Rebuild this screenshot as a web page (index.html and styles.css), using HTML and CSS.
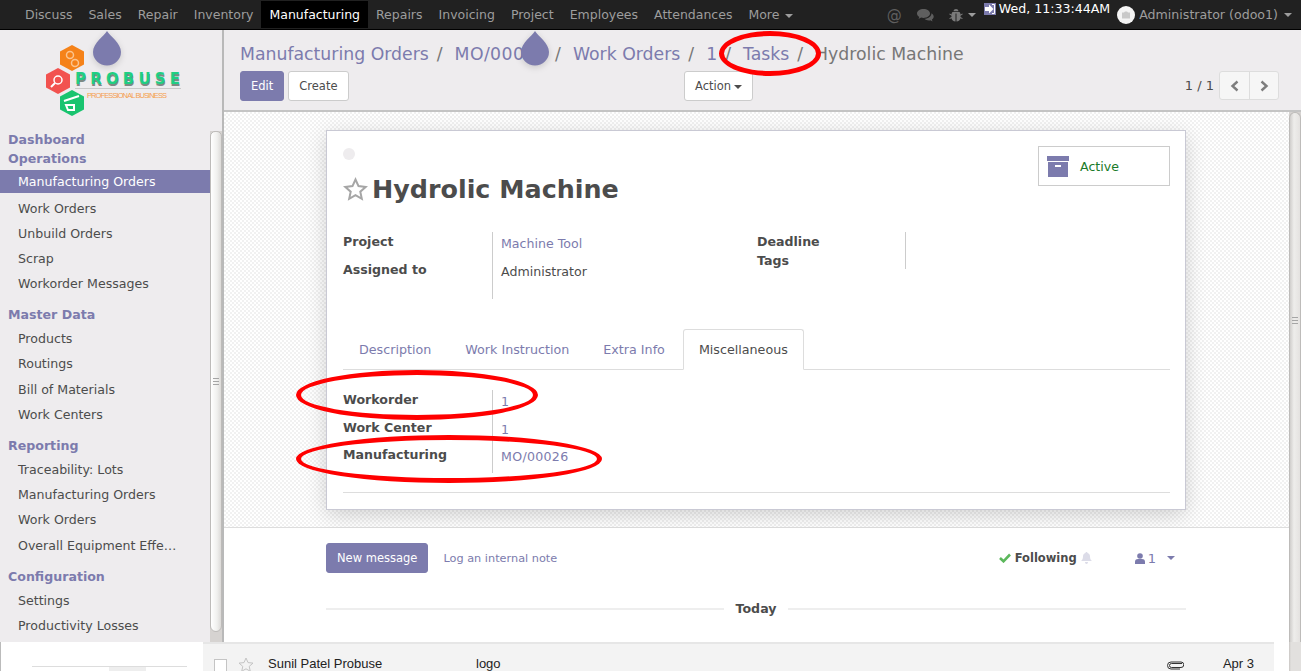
FILE: index.html
```html
<!DOCTYPE html>
<html lang="en">
<head>
  <meta charset="UTF-8" />
  <meta name="viewport" content="width=device-width, initial-scale=1.0"/>
  <title>Hydrolic Machine - Odoo</title>
  <link rel="stylesheet" href="styles.css">
</head>
<body>

  <header class="topbar">
    <nav class="apps">
      <a>Discuss</a>
      <a>Sales</a>
      <a>Repair</a>
      <a>Inventory</a>
      <a class="current">Manufacturing</a>
      <a>Repairs</a>
      <a>Invoicing</a>
      <a>Project</a>
      <a>Employees</a>
      <a>Attendances</a>
      <a>More <i class="caret"></i></a>
    </nav>
    <div class="systray">
      <span class="at">@</span>
      <svg class="tray-chat" width="17" height="14" viewBox="0 0 17 14"><path fill="#5f5f5f" d="M6.5 1C2.9 1 0 3 0 5.5c0 1.4.9 2.6 2.3 3.4L1.5 11l2.6-1.4c.8.2 1.6.3 2.4.3 3.6 0 6.5-2 6.5-4.4S10.100 1 6.500 1z"/><path fill="#5f5f5f" d="M14.500 5.200c.1 3-2.900 5.400-7 5.600 1 1 2.600 1.600 4.400 1.600.5 0 1 0 1.500-.2l2.100 1.200-.6-1.800c1.100-.7 1.800-1.700 1.800-2.800 0-1.500-.9-2.800-2.200-3.600z"/></svg>
      <span class="tray-bug">
        <svg width="14" height="14" viewBox="-.5 0 14 14"><path fill="#7a7a7a" d="M4 3.200C4.200 1.700 5.200 1 6.500 1S8.800 1.700 9 3.200zM3 4h7c.6.6 1 1.400 1 2.400l1.800-1 .5.9L11 7.800V9l2.200 1.200-.5.900L11 10.200c-.3 1.800-1.800 3.300-4 3.300V5.500H6v8c-2.200 0-3.700-1.500-4-3.300l-1.700.9-.5-.9L2 9V7.800L-.3 6.300l.5-.9 1.800 1c0-1 .4-1.800 1-2.400z"/></svg>
        <i class="caret"></i>
      </span>
      <span class="clock">
        <svg width="12" height="12" viewBox="0 0 12 12"><rect width="12" height="12" fill="#7c7bad"/><path fill="#fff" d="M1 4h4V1.500L9.500 6 5 10.500V8H1z"/><path fill="none" stroke="#fff" stroke-width="1" d="M8 1.500h2.500v9H8"/></svg>
        <span>Wed, 11:33:44AM</span>
      </span>
      <span class="user">
        <svg width="18" height="18" viewBox="0 0 18 18"><circle cx="9" cy="9" r="9" fill="#f4f4f4"/><path fill="#c9c9c9" d="M5 6.500h2l1-1h2l1 1h2v6H5z"/></svg>
        <span>Administrator (odoo1)</span>
        <i class="caret"></i>
      </span>
    </div>
  </header>

  <div class="app">
    <aside class="sidebar">
      <div class="sidebar-body">
        <div class="logo">
          <svg width="210" height="100" viewBox="0 29 210 100">
            <polygon fill="#f58219" points="72,44 84,50.500 84,63.500 72,70 60,63.500 60,50.500"/>
            <polygon fill="#f2524f" points="58,67 70,73.500 70,86.500 58,93 46,86.500 46,73.500"/>
            <polygon fill="#19c46f" points="72,89 84,95.500 84,108.500 72,115 60,108.500 60,95.500"/>
            <circle cx="70" cy="54" r="3.500" fill="none" stroke="#fbc48e" stroke-width="1.500"/>
            <circle cx="75" cy="62" r="3.500" fill="none" stroke="#fbc48e" stroke-width="1.500"/>
            <circle cx="58" cy="79" r="4" fill="none" stroke="#fff" stroke-width="1.500"/>
            <path stroke="#fff" stroke-width="2" d="M55 82l-4 4"/>
            <path stroke="#fff" stroke-width="2" fill="none" d="M64 100l15-5M66 104h8v5h-6z"/>
            <text class="logo-shade" x="75.500" y="84.500" textLength="105">PROBUSE</text>
            <text class="logo-name" x="75" y="83" textLength="105">PROBUSE</text>
            <line x1="75" y1="87.500" x2="181" y2="87.500" stroke="#c9c9c9"/>
            <text class="logo-tag" x="87" y="97" textLength="80">PROFESSIONAL BUSINESS</text>
          </svg>
        </div>
        <h4 class="menu-head">Dashboard</h4>
        <h4 class="menu-head">Operations</h4>
        <a class="menu-item active">Manufacturing Orders</a>
        <a class="menu-item">Work Orders</a>
        <a class="menu-item">Unbuild Orders</a>
        <a class="menu-item">Scrap</a>
        <a class="menu-item">Workorder Messages</a>
        <h4 class="menu-head spaced">Master Data</h4>
        <a class="menu-item">Products</a>
        <a class="menu-item">Routings</a>
        <a class="menu-item">Bill of Materials</a>
        <a class="menu-item">Work Centers</a>
        <h4 class="menu-head spaced">Reporting</h4>
        <a class="menu-item">Traceability: Lots</a>
        <a class="menu-item">Manufacturing Orders</a>
        <a class="menu-item">Work Orders</a>
        <a class="menu-item">Overall Equipment Effe…</a>
        <h4 class="menu-head spaced">Configuration</h4>
        <a class="menu-item">Settings</a>
        <a class="menu-item">Productivity Losses</a>
      </div>
      <div class="side-rail">
        <div class="rail-thumb"><span class="grip"></span></div>
      </div>
    </aside>

    <main class="main">
      <section class="control-panel">
        <ol class="breadcrumb">
          <li><a>Manufacturing Orders</a></li>
          <li><a class="ref-no">MO/00026</a></li>
          <li><a>Work Orders</a></li>
          <li><a>1</a></li>
          <li><a>Tasks</a></li>
          <li class="last">Hydrolic Machine</li>
        </ol>
        <div class="cp-row">
          <div class="cp-buttons">
            <button class="btn primary">Edit</button>
            <button class="btn">Create</button>
          </div>
          <button class="btn action">Action<i class="caret dark"></i></button>
          <div class="pager">
            <span class="pager-count">1 / 1</span>
            <span class="pager-btns">
              <span><svg width="9" height="12" viewBox="0 0 9 12"><path fill="none" stroke="#7d7d7d" stroke-width="2.400" d="M7.500 1.500L2.500 6l5 4.500"/></svg></span>
              <span><svg width="9" height="12" viewBox="0 0 9 12"><path fill="none" stroke="#7d7d7d" stroke-width="2.400" d="M1.500 1.500l5 4.500-5 4.500"/></svg></span>
            </span>
          </div>
        </div>
      </section>

      <div class="content">
        <div class="view">
          <div class="sheet-bg">
            <article class="sheet">
              <div class="sheet-head">
                <div>
                  <span class="kanban-dot"></span>
                  <h1 class="title">
                    <svg width="25" height="25" viewBox="0 0 25 25"><path fill="none" stroke="#a6a6a6" stroke-width="2" d="M12.500 2.500l3 6.600 7.200.8-5.400 4.800 1.500 7.100-6.300-3.600-6.300 3.600 1.500-7.100-5.400-4.800 7.200-.8z"/></svg>
                    <span>Hydrolic Machine</span>
                  </h1>
                </div>
                <div class="stat-btn">
                  <svg width="22" height="21" viewBox="0 0 22 21"><rect width="22" height="5" fill="#7c7bad"/><rect x="1" y="6" width="20" height="15" fill="#7c7bad"/><rect x="8" y="9" width="6" height="2" fill="#fff"/></svg>
                  <span>Active</span>
                </div>
              </div>

              <div class="groups">
                <div class="fields top-left">
                  <div class="f-label">Project</div>
                  <div class="f-value"><a>Machine Tool</a></div>
                  <div class="f-label">Assigned to</div>
                  <div class="f-value">Administrator</div>
                </div>
                <div class="fields top-right">
                  <div class="f-label">Deadline</div>
                  <div class="f-value"></div>
                  <div class="f-label">Tags</div>
                  <div class="f-value"></div>
                </div>
              </div>

              <ul class="tabs">
                <li>Description</li>
                <li>Work Instruction</li>
                <li>Extra Info</li>
                <li class="active">Miscellaneous</li>
              </ul>

              <div class="fields misc">
                <div class="f-label">Workorder</div>
                <div class="f-value"><a>1</a></div>
                <div class="f-label">Work Center</div>
                <div class="f-value"><a>1</a></div>
                <div class="f-label">Manufacturing</div>
                <div class="f-value"><a class="ref-small">MO/00026</a></div>
              </div>
              <hr class="sheet-rule">
            </article>
          </div>

          <section class="chatter">
            <div class="chatter-bar">
              <button class="btn primary">New message</button>
              <a class="log-note">Log an internal note</a>
              <span class="follow">
                <svg width="12" height="10" viewBox="0 0 12 10"><path fill="none" stroke="#5cb85c" stroke-width="2.600" d="M1 5l3.500 3.300L11 1.500"/></svg>
                <b>Following</b>
                <svg width="11" height="12" viewBox="0 0 11 12"><path fill="#dcdce8" d="M5.500 0c.6 0 1 .4 1 1 1.700.4 2.500 1.800 2.500 3.500 0 2.500.7 3.500 2 4.500H0c1.300-1 2-2 2-4.500C2 2.800 2.800 1.400 4.500 1c0-.6.4-1 1-1zM4 10h3c0 1-.7 2-1.500 2S4 11 4 10z"/></svg>
              </span>
              <span class="followers">
                <svg width="10" height="11" viewBox="0 0 10 11"><circle cx="5" cy="3" r="2.800" fill="#7c7bad"/><path fill="#7c7bad" d="M0 11V8.500C0 6.800 1.500 6 3 6h4c1.500 0 3 .8 3 2.500V11z"/></svg>
                <a>1</a>
                <i class="caret purple"></i>
              </span>
            </div>
            <div class="today"><span>Today</span></div>
          </section>
        </div>
        <div class="main-scroll">
          <div class="rail-thumb"><span class="grip"></span></div>
        </div>
      </div>
    </main>
  </div>

  <footer class="bottom-strip">
    <div class="strip-left"><span class="strip-tab"></span></div>
    <div class="mail-row">
      <span class="mail-check"></span>
      <svg class="mail-star" width="16" height="16" viewBox="0 0 16 16"><path fill="none" stroke="#c4c4c4" d="M8 1l2 4.600 5 .5-3.800 3.300 1.100 4.900L8 11.800l-4.300 2.500 1.100-4.900L1 6.100l5-.5z"/></svg>
      <span class="mail-from">Sunil Patel Probuse</span>
      <span class="mail-subject">logo</span>
      <svg class="mail-clip" width="17" height="9" viewBox="0 0 17 9"><path fill="none" stroke="#333" d="M15 2.500H4.500a2 2 0 0 0 0 4H14a2.500 2.500 0 0 0 0-5.500H4A3.500 3.500 0 0 0 4 8h9"/></svg>
      <span class="mail-date">Apr 3</span>
    </div>
    <div class="strip-right"></div>
  </footer>

  <!-- marks drawn over the screenshot -->
  <svg class="drop drop-side" width="30" height="36" viewBox="0 0 30 36"><path fill="#7c7bad" d="M15 1c3 5 14 12 14 21a14 13.500 0 0 1-28 0C1 13 12 6 15 1z"/></svg>
  <svg class="drop drop-crumb" width="30" height="36" viewBox="0 0 30 36"><path fill="#7c7bad" d="M15 1c3 5 14 12 14 21a14 13.500 0 0 1-28 0C1 13 12 6 15 1z"/></svg>
  <span class="ring ring-tasks"></span>
  <span class="ring ring-workorder"></span>
  <span class="ring ring-manufacturing"></span>

</body>
</html>
```

FILE: styles.css
```css
* { box-sizing: border-box; }
html, body { height: 100%; }
body {
  margin: 0;
  display: flex;
  flex-direction: column;
  overflow: hidden;
  font-family: "DejaVu Sans", sans-serif;
  font-size: 12.6px;
  color: #4c4c4c;
  background: #fff;
}
a { color: #7c7bad; text-decoration: none; }

.caret {
  display: inline-block;
  width: 0;
  height: 0;
  margin-left: 2px;
  vertical-align: middle;
  border-top: 4px solid #9d9d9d;
  border-left: 4px solid transparent;
  border-right: 4px solid transparent;
}
.caret.dark { border-top-color: #4c4c4c; }
.caret.purple { border-top-color: #7c7bad; }
.action .caret { margin-left: 3px; }

/* top bar */
.topbar {
  flex: none;
  height: 30px;
  display: flex;
  background: #212121;
  border-bottom: 1px solid #000;
  color: #9d9d9d;
}
.apps {
  display: flex;
  padding: 1px 0 1px 17px;
  font-size: 12.5px;
}
.apps a {
  padding: 0 8px;
  line-height: 27px;
  color: #9d9d9d;
}
.apps a.current { background: #000; color: #fff; }
.systray {
  margin-left: auto;
  display: flex;
  align-items: center;
  height: 29px;
  padding-right: 9px;
}
.at { font-size: 15px; color: #5f5f5f; margin-right: 15px; }
.tray-chat { margin-right: 15px; }
.tray-bug { display: flex; align-items: center; gap: 3px; margin-right: 8px; }
.clock {
  display: flex;
  align-self: flex-start;
  align-items: center;
  gap: 3px;
  height: 17px;
  color: #fff;
}
.user { display: flex; align-items: center; margin-left: 7px; gap: 4px; }
.user .caret { margin-left: 2px; }

/* layout */
.app { flex: none; height: 612px; display: flex; }
.sidebar {
  flex: none;
  width: 224px;
  display: flex;
  background: #eeecee;
  border-right: 2px solid #b9b9b9;
}
.sidebar-body { flex: none; width: 210px; }
.logo { height: 99.5px; }
.logo svg { display: block; }
.logo-name { font: bold 15px "DejaVu Sans", sans-serif; fill: #1fcf83; }
.logo-shade { font: bold 15px "DejaVu Sans", sans-serif; fill: #7d8a84; }
.logo-tag { font: 7.5px "Liberation Sans", sans-serif; fill: #f5a04e; }

.menu-head {
  margin: 0;
  padding-left: 8px;
  font-size: 12.6px;
  font-weight: bold;
  line-height: 19px;
  color: #7c7bad;
}
.menu-head.spaced { margin-top: 10.2px; }
.menu-head + .menu-item { margin-top: 3px; }
.menu-item {
  display: block;
  height: 23px;
  margin-bottom: 2.2px;
  padding: 0 8px 0 18px;
  line-height: 23px;
  color: #4c4c4c;
  white-space: nowrap;
}
.menu-head + .menu-item.active {
  margin-top: 2.5px;
  margin-bottom: 3.5px;
  line-height: 24px;
  background: #7c7bad;
  color: #fff;
}

.side-rail {
  flex: none;
  width: 12px;
  padding: 101px 0 10px;
  display: flex;
  background: linear-gradient(#eeecee 101px, #d6d3d1 101px);
}
.rail-thumb {
  flex: 1;
  display: flex;
  align-items: center;
  justify-content: center;
  background: linear-gradient(90deg, #fff, #f0f0ee 60%, #dcdad8);
  border: 1px solid #bdbbb9;
  border-radius: 6px 6px 7px 7px;
}
.grip {
  width: 6px;
  height: 8px;
  background: repeating-linear-gradient(#a5a5a5 0 1px, transparent 1px 3px);
}

/* main area */
.main { flex: 1; min-width: 0; display: flex; flex-direction: column; }
.control-panel {
  flex: none;
  height: 82px;
  padding: 0 22px 0 16px;
  background: #eeecee;
  border-bottom: 2px solid #c4c4c4;
}
.breadcrumb {
  list-style: none;
  margin: 0;
  padding: 12px 0 0;
  height: 41px;
  display: flex;
  font-size: 17.3px;
  line-height: 24px;
}
.breadcrumb li:not(.last)::after {
  content: "/";
  margin: 0 12px 0 8px;
  color: #777;
}
.breadcrumb .last { color: #777; }
.ref-no { letter-spacing: 0.4px; }
.cp-row { display: flex; align-items: flex-start; }
.cp-buttons { width: 444px; display: flex; gap: 4px; }
.btn {
  height: 30px;
  padding: 0 10px;
  font: 11.5px "DejaVu Sans", sans-serif;
  color: #4c4c4c;
  background: #fff;
  border: 1px solid #ccc;
  border-radius: 3px;
}
.btn.primary { background: #7c7bad; border-color: #7c7bad; color: #fff; }
.pager { margin-left: auto; display: flex; align-items: center; gap: 5px; color: #4c4c4c; }
.pager-count { font-size: 13px; }
.pager-btns {
  display: flex;
  height: 29px;
  background: #f6f6f6;
  border: 1px solid #ddd;
  border-radius: 3px;
}
.pager-btns span {
  width: 29px;
  display: flex;
  align-items: center;
  justify-content: center;
}
.pager-btns span + span { border-left: 1px solid #ddd; }

.content { flex: 1; min-height: 0; display: flex; }
.view { flex: 1; min-width: 0; display: flex; flex-direction: column; overflow: hidden; }
.main-scroll { flex: none; width: 12px; display: flex; background: #d6d3d1; }
.main-scroll .rail-thumb {
  align-items: flex-start;
  padding-top: 204px;
  background: linear-gradient(90deg, #d0cecc, #eeedeb 40%, #e4e2e0);
  border-radius: 6px 6px 0 0;
  border-bottom: 0;
}

.sheet-bg {
  flex: none;
  padding: 18px 0 17px;
  background: repeating-conic-gradient(#f1f1f1 0 25%, #fff 0 50%) 0 0 / 4px 4px;
  border-bottom: 1px solid #ddd;
}
.sheet {
  width: 860px;
  height: 380px;
  margin-left: 102px;
  padding: 15px 15px 0 16px;
  background: #fff;
  border: 1px solid #c9c9d4;
  box-shadow: 0 5px 20px -1px rgba(0,0,0,0.19);
}
.sheet-head { display: flex; justify-content: space-between; align-items: flex-start; height: 86px; }
.kanban-dot {
  display: block;
  width: 12px;
  height: 12px;
  margin-top: 2px;
  border-radius: 50%;
  background: #eeecee;
}
.title {
  display: flex;
  align-items: center;
  gap: 4px;
  margin: 12px 0 0;
  font-size: 25.4px;
  line-height: 34px;
  font-weight: bold;
  color: #4c4c4c;
}
.stat-btn {
  width: 132px;
  height: 40px;
  display: flex;
  align-items: center;
  gap: 11px;
  padding-left: 8px;
  border: 1px solid #ccc;
  color: #1a7a2a;
}

.groups { display: flex; }
.fields { display: grid; grid-template-columns: 149px 1fr; }
.f-label { font-weight: bold; line-height: 18px; padding-top: 1px; }
.f-value { border-left: 1px solid #ccc; padding: 3px 8px 0; line-height: 18px; }
.ref-small { letter-spacing: 0.3px; }
.top-left { width: 414px; grid-template-rows: 28px 39px; }
.top-right { width: 149px; height: 37px; grid-template-columns: 148px 1px; grid-template-rows: 19px 18px; }
.top-right .f-value { padding: 0; }
.misc { margin-top: 20px; grid-auto-rows: 27.5px; }

.tabs {
  list-style: none;
  display: flex;
  gap: 2px;
  height: 41px;
  margin: 30px 0 0;
  padding: 0;
  border-bottom: 1px solid #ddd;
  font-size: 12.7px;
}
.tabs li {
  height: 41px;
  padding: 0 15px;
  line-height: 40px;
  color: #7c7bad;
  border: 1px solid transparent;
  border-radius: 3px 3px 0 0;
}
.tabs li.active {
  color: #4c4c4c;
  background: #fff;
  border-color: #ddd;
  border-bottom-color: #fff;
}
.sheet-rule { margin: 19px 0 0; border: 0; border-top: 1px solid #ddd; }

/* chatter */
.chatter { flex: 1; background: #fff; }
.chatter-bar {
  width: 860px;
  margin: 15px 0 0 102px;
  display: flex;
  align-items: center;
  font-size: 11.5px;
}
.chatter-bar .btn { padding: 0 10px; }
.log-note { margin-left: 15px; font-size: 11.3px; }
.follow { margin-left: auto; display: flex; align-items: center; gap: 4px; }
.follow b { font-weight: bold; }
.followers { display: flex; align-items: center; gap: 3px; margin: 0 11px 0 43px; font-size: 13px; }
.followers .caret { margin-left: 8px; }
.today {
  width: 860px;
  margin: 28px 0 0 102px;
  display: flex;
  align-items: center;
  gap: 12px;
  font-weight: bold;
}
.today::before, .today::after { content: ""; flex: 1; height: 2px; background: #eee; }

/* mail row at the bottom edge */
.bottom-strip { flex: 1; min-height: 0; display: flex; overflow: hidden; }
.strip-left {
  flex: none;
  width: 203px;
  padding: 24px 16px 0 31px;
  border-left: 1px solid #bbb;
  background: #fff;
}
.strip-tab {
  display: block;
  height: 6px;
  border-top: 1px solid #ddd;
  background: linear-gradient(90deg, transparent 77px, #eee 77px, #eee 114px, transparent 114px);
}
.mail-row {
  flex: 1;
  display: flex;
  align-items: flex-start;
  height: 29px;
  padding-top: 12px;
  background: #f3f3f3;
  border-top: 2px solid #e6e6e6;
  font-family: "Liberation Sans", sans-serif;
  font-size: 13px;
  line-height: 15px;
  color: #222;
}
.mail-check {
  flex: none;
  width: 13px;
  height: 13px;
  margin: 3px 11px 0;
  background: #fff;
  border: 1px solid #c4c4c4;
}
.mail-star { flex: none; margin-top: 1px; }
.mail-from { margin-left: 14px; width: 208px; }
.mail-subject { flex: 1; }
.mail-clip { margin: 5px 39px 0 0; }
.mail-date { margin-right: 20px; }
.strip-right {
  flex: none;
  width: 27px;
  background: linear-gradient(90deg, #fff 15px, #c9c6c3 15px, #e2e0de 17px);
}

/* overlays */
.drop { position: absolute; top: 30px; filter: drop-shadow(0 2px 3px rgba(0,0,0,0.15)); }
.drop-side { left: 92px; }
.drop-crumb { left: 520px; }
.ring {
  position: absolute;
  border: 5px solid #f00;
  border-radius: 50%;
}
.ring-tasks { left: 719px; top: 31px; width: 102px; height: 45px; }
.ring-workorder { left: 296px; top: 370px; width: 242px; height: 50px; }
.ring-manufacturing { left: 296px; top: 435px; width: 306px; height: 48px; }
```
